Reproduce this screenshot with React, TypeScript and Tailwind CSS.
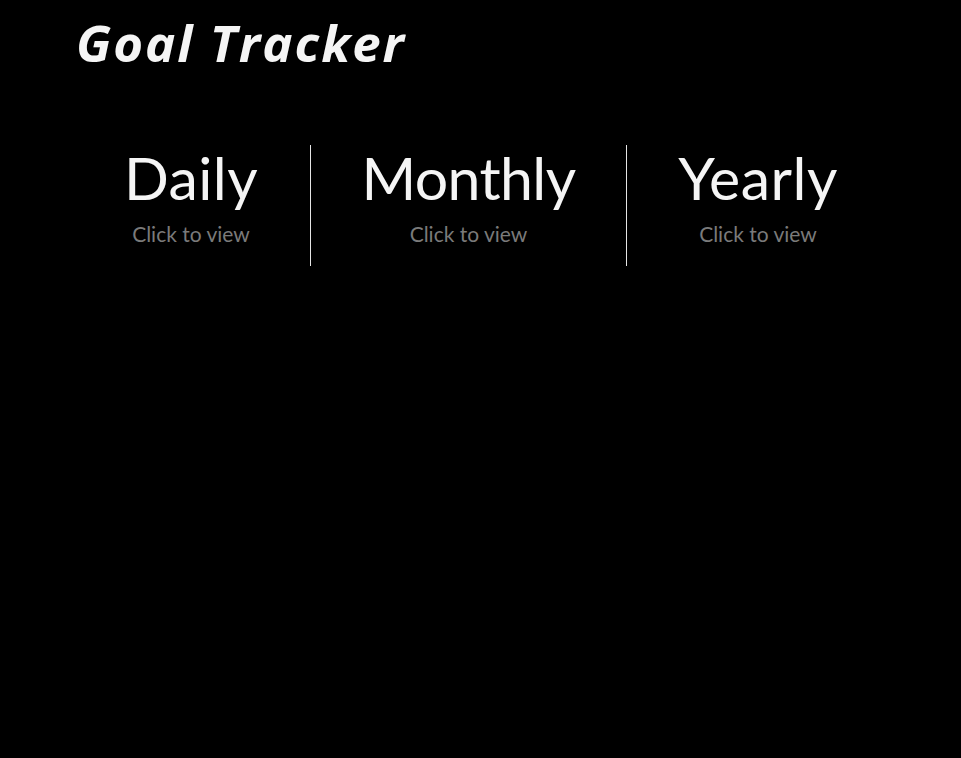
const items = [
  { t: "Daily", w: "w-[238px]", tr: "tracking-[0.4px]" },
  { t: "Monthly", w: "w-[316px]", tr: "tracking-[-0.6px]" },
  { t: "Yearly", w: "w-[263px]", tr: "tracking-[0.5px]" },
];

export default function App() {
  return (
    <div className="min-h-[758px] w-full bg-black text-[#f5f5f5]">
      <h1 className="pl-[76px] pt-[9px] text-[51px] font-bold italic leading-[66px] tracking-[2px] text-[#f5f5f5] [font-family:'Open_Sans',sans-serif]">
        Goal Tracker
      </h1>
      <div className="mt-[70px] flex justify-center">
        {items.map((it, i) => (
          <div
            key={it.t}
            className={`flex h-[121px] flex-col items-center [font-family:'Lato',sans-serif] ${it.w} ${i > 0 ? "border-l border-[#e5e5e5]" : ""}`}
          >
            <div className={`mt-[-2px] text-[59px] leading-[70px] ${it.tr}`}>{it.t}</div>
            <div className="mt-[9px] text-[21px] leading-[24px] text-[#7a7a7a]">Click to view</div>
          </div>
        ))}
      </div>
    </div>
  );
}
